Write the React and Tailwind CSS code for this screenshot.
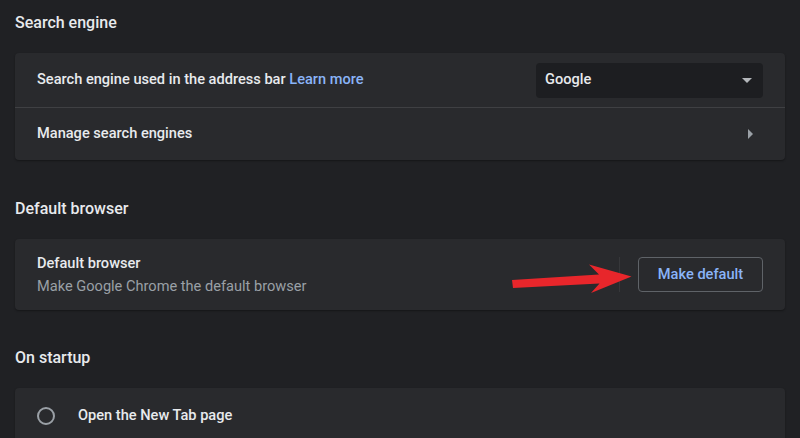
function SectionTitle({ children, first, className = '' }) {
  return (
    <h2 className={`${first ? 'pt-[13px]' : 'pt-[39px]'} pb-5 text-[16px] leading-5 font-medium text-[#e8eaed] ${className}`}>
      {children}
    </h2>
  );
}

function Card({ children, className = '' }) {
  return <div className={`relative rounded-[4px] bg-[#292a2d] shadow-[0_1px_2px_rgba(0,0,0,0.35)] ${className}`}>{children}</div>;
}

function CaretDown() {
  return (
    <svg width="10" height="5" viewBox="0 0 10 5" className="text-[#b4b7bb]">
      <path d="M0 0h10L5 5z" fill="currentColor" />
    </svg>
  );
}

function CaretRight() {
  return (
    <svg width="5" height="10" viewBox="0 0 5 10" className="text-[#9aa0a6]">
      <path d="M0 0l5 5-5 5z" fill="currentColor" />
    </svg>
  );
}

function PointerArrow() {
  return (
    <svg
      className="pointer-events-none absolute left-[497px] top-[25px]"
      width="120"
      height="30"
      viewBox="512 264 120 30"
    >
      <path
        d="M512 280 L599 274.5 L589 264.5 L631.5 276.5 L591 293 L599.5 283.5 L513 288 Z"
        fill="#e8262b"
      />
    </svg>
  );
}

export default function App() {
  return (
    <div
      className="h-[438px] w-[800px] overflow-hidden bg-[#202124] px-[15px] text-[14.6px] text-[#e8eaed]"
      style={{ fontFamily: 'Roboto, "Noto Sans", Arial, sans-serif' }}
    >
      <SectionTitle first>Search engine</SectionTitle>
      <Card>
        <div className="flex h-[54px] items-center justify-between px-[22px]">
          <span className="font-medium">
            Search engine used in the address bar{' '}
            <span className="text-[#8ab4f8]">Learn more</span>
          </span>
          <div className="flex h-[35px] w-[227px] items-center justify-between rounded-[4px] bg-[#1d1e21] pl-[9px] pr-[11px]">
            <span className="font-medium">Google</span>
            <CaretDown />
          </div>
        </div>
        <div className="border-t border-[#3f4043]" />
        <div className="flex h-[52px] items-center justify-between pl-[22px] pr-[32px]">
          <span className="font-medium">Manage search engines</span>
          <CaretRight />
        </div>
      </Card>

      <SectionTitle>Default browser</SectionTitle>
      <Card className="h-[71px]">
        <div className="flex h-full items-center justify-between px-[22px]">
          <div className="flex flex-col gap-px">
            <span className="leading-[22px] font-medium">Default browser</span>
            <span className="leading-[22px] text-[#9aa0a6]">Make Google Chrome the default browser</span>
          </div>
          <div className="flex items-center gap-[18px]">
            <div className="h-[35px] w-px bg-[#36373a]" />
            <button
              type="button"
              className="h-[35px] w-[125px] rounded-[4px] border border-[#5f6368] text-[14.6px] font-medium text-[#8ab4f8]"
            >
              Make default
            </button>
          </div>
        </div>
        <PointerArrow />
      </Card>

      <SectionTitle className="!pt-[38px]">On startup</SectionTitle>
      <Card className="h-[80px]">
        <div className="flex h-[56px] items-center gap-[23px] px-[22px]">
          <span className="h-[18px] w-[18px] rounded-full border-2 border-[#9aa0a6]" />
          <span className="font-medium">Open the New Tab page</span>
        </div>
      </Card>
    </div>
  );
}
